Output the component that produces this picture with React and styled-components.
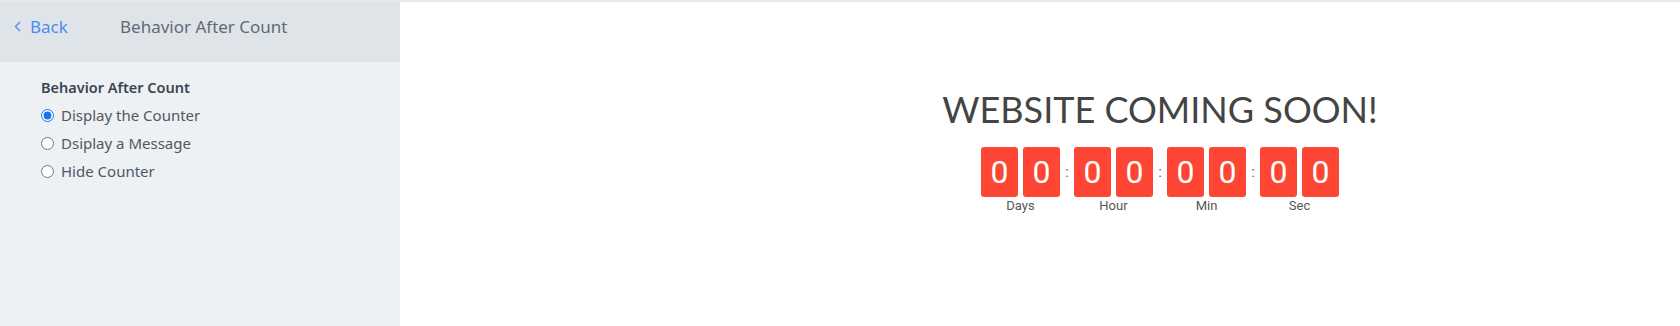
import React from "react";
import styled, { createGlobalStyle } from "styled-components";

const GlobalStyle = createGlobalStyle`
  html, body {
    margin: 0;
    padding: 0;
    background: #ffffff;
  }
  body {
    width: 1680px;
    height: 326px;
    overflow: hidden;
  }
`;

const Page = styled.div`
  display: flex;
  height: 324px;
  border-top: 2px solid #e6e9ee;
`;

const Sidebar = styled.aside`
  width: 400px;
  flex-shrink: 0;
  display: flex;
  flex-direction: column;
  background: #edf1f4;
  font-family: "Noto Sans", "Open Sans", sans-serif;
`;

const SideHeader = styled.div`
  height: 60px;
  box-sizing: border-box;
  display: flex;
  align-items: flex-start;
  padding: 13px 0 0 14px;
  background: #dfe4e8;
`;

const BackLink = styled.a`
  display: flex;
  align-items: center;
  gap: 9px;
  width: 106px;
  color: #4f8af5;
  font-size: 17px;
  text-decoration: none;
  cursor: pointer;
`;

const HeaderTitle = styled.div`
  color: #5f6b78;
  font-size: 17px;
`;

const SideBody = styled.div`
  padding: 15px 0 0 41px;
  display: flex;
  flex-direction: column;
`;

const SectionLabel = styled.div`
  color: #3b4552;
  font-size: 14.5px;
  font-weight: 600;
  margin-bottom: 4px;
`;

const RadioRow = styled.label`
  display: flex;
  align-items: center;
  gap: 7px;
  height: 28px;
  color: #4d5864;
  font-size: 15px;
  cursor: pointer;

  input {
    margin: 0;
    width: 13px;
    height: 13px;
    accent-color: #1a73e8;
  }
`;

const Main = styled.main`
  flex: 1;
  display: flex;
  justify-content: center;
  padding-left: 240px;
  padding-top: 83px;
`;

const Counter = styled.div`
  display: flex;
  flex-direction: column;
  align-items: center;
`;

const Title = styled.h1`
  margin: 0 0 14px;
  font-family: Lato, "Noto Sans", sans-serif;
  font-weight: 400;
  font-size: 36px;
  color: #444444;
  line-height: 48px;
`;

const Units = styled.div`
  display: flex;
  align-items: flex-start;
`;

const Unit = styled.div`
  display: flex;
  flex-direction: column;
  align-items: center;
`;

const Digits = styled.div`
  display: flex;
  gap: 5px;
`;

const DigitBox = styled.div`
  width: 37px;
  height: 50px;
  border-radius: 3px;
  background: #ff4533;
  color: #ffffff;
  font-family: Roboto, "Liberation Sans", sans-serif;
  font-size: 32px;
  display: flex;
  align-items: center;
  justify-content: center;
`;

const UnitLabel = styled.div`
  margin-top: 1px;
  font-family: Roboto, "Liberation Sans", sans-serif;
  font-size: 13px;
  color: #555555;
`;

const Colon = styled.div`
  width: 14px;
  height: 50px;
  display: flex;
  align-items: center;
  justify-content: center;
  font-family: Roboto, "Liberation Sans", sans-serif;
  font-size: 15px;
  color: #666666;
`;

const units = ["Days", "Hour", "Min", "Sec"];
const options = ["Display the Counter", "Dsiplay a Message", "Hide Counter"];

export default function App() {
  return (
    <>
      <GlobalStyle />
      <Page>
        <Sidebar>
          <SideHeader>
            <BackLink>
              <svg width="7" height="11" viewBox="0 0 7 11" fill="none">
                <path d="M6 1L1.5 5.5L6 10" stroke="#4f8af5" strokeWidth="1.4" />
              </svg>
              Back
            </BackLink>
            <HeaderTitle>Behavior After Count</HeaderTitle>
          </SideHeader>
          <SideBody>
            <SectionLabel>Behavior After Count</SectionLabel>
            {options.map((o, i) => (
              <RadioRow key={o}>
                <input type="radio" name="after" defaultChecked={i === 0} />
                {o}
              </RadioRow>
            ))}
          </SideBody>
        </Sidebar>
        <Main>
          <Counter>
            <Title>WEBSITE COMING SOON!</Title>
            <Units>
              {units.map((u, i) => (
                <React.Fragment key={u}>
                  {i > 0 && <Colon>:</Colon>}
                  <Unit>
                    <Digits>
                      <DigitBox>0</DigitBox>
                      <DigitBox>0</DigitBox>
                    </Digits>
                    <UnitLabel>{u}</UnitLabel>
                  </Unit>
                </React.Fragment>
              ))}
            </Units>
          </Counter>
        </Main>
      </Page>
    </>
  );
}
